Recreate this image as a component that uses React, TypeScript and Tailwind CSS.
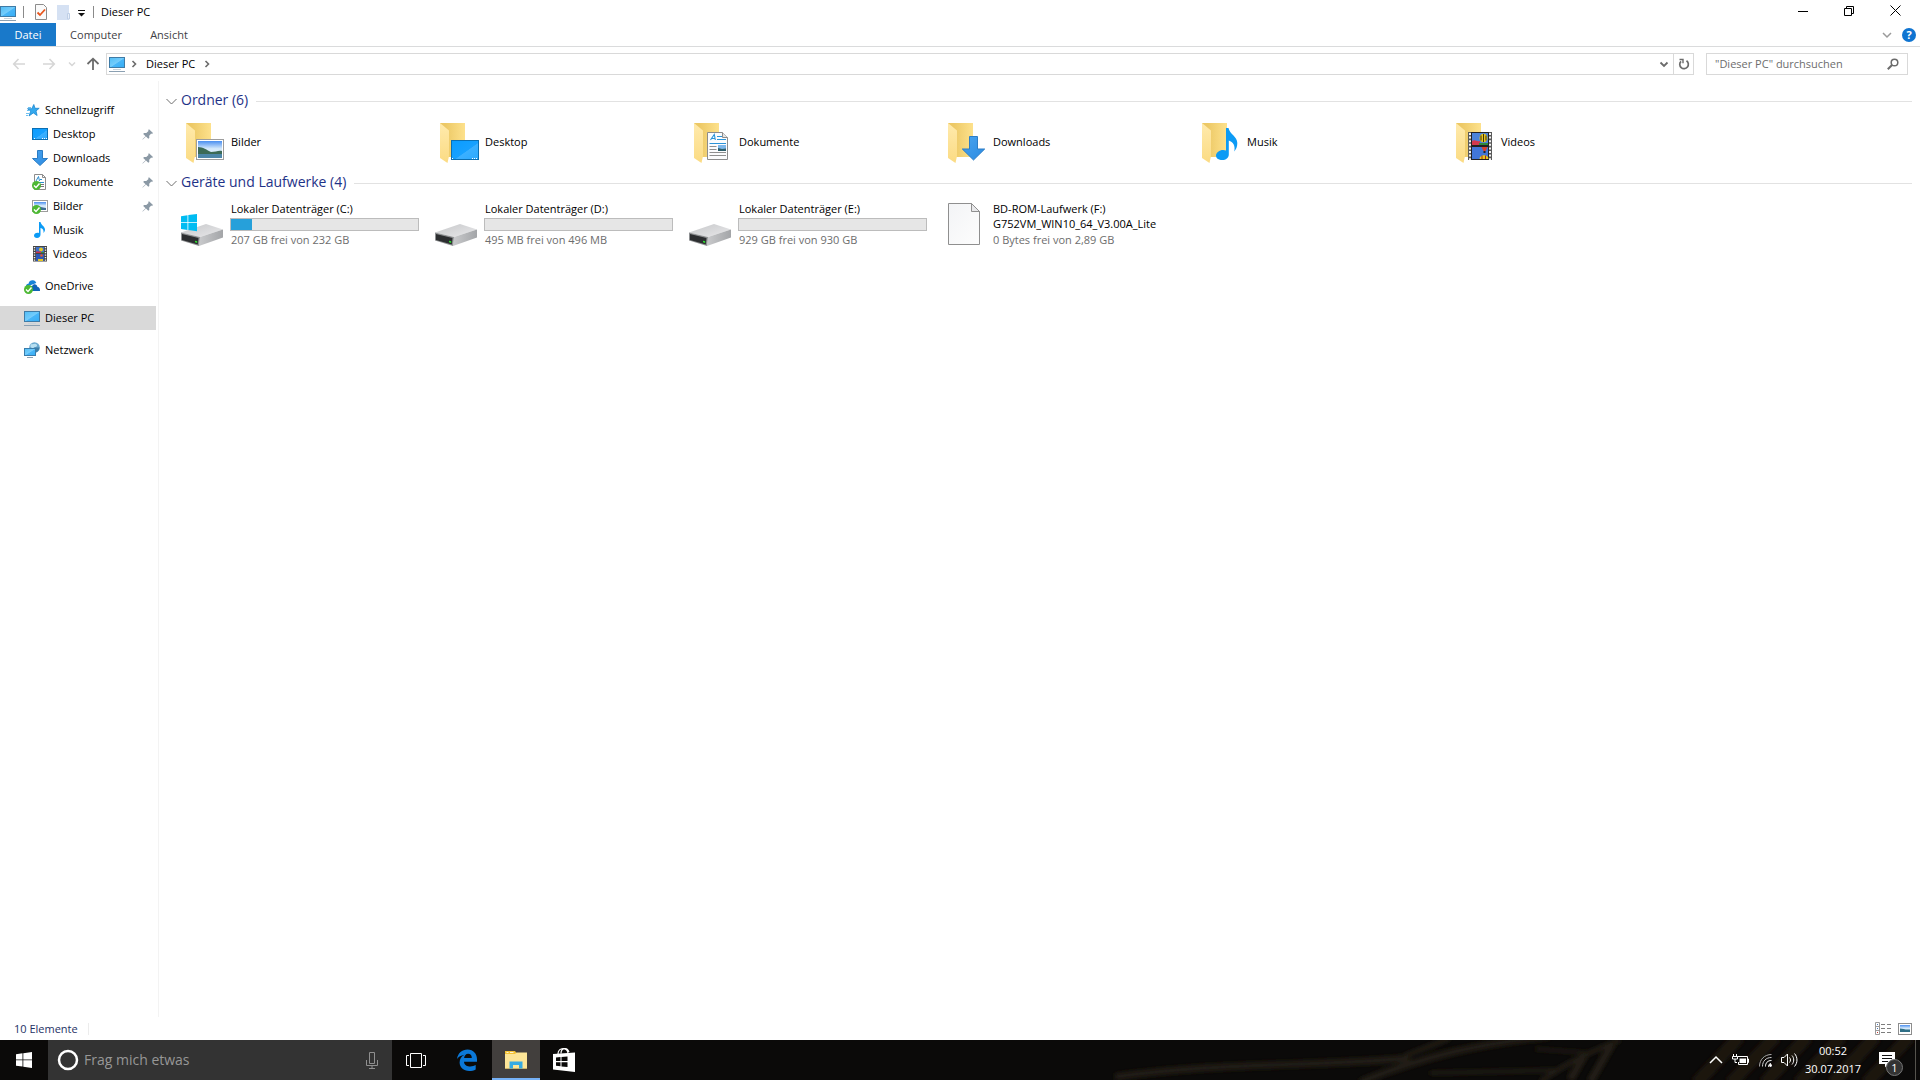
import type { ReactNode } from "react";

const folders = [
  { name: "Bilder", art: "pictures" },
  { name: "Desktop", art: "desktop" },
  { name: "Dokumente", art: "documents" },
  { name: "Downloads", art: "downloads" },
  { name: "Musik", art: "music" },
  { name: "Videos", art: "videos" },
];

const drives = [
  { name: "Lokaler Datenträger (C:)", free: "207 GB frei von 232 GB", used: 11, system: true },
  { name: "Lokaler Datenträger (D:)", free: "495 MB frei von 496 MB", used: 0, system: false },
  { name: "Lokaler Datenträger (E:)", free: "929 GB frei von 930 GB", used: 0, system: false },
];

function Gradients() {
  return (
    <svg className="absolute h-0 w-0" aria-hidden="true">
      <defs>
        <linearGradient id="screen" x1="0" y1="0" x2="1" y2="1">
          <stop offset="0" stopColor="#4fbdf6" />
          <stop offset="0.5" stopColor="#74ccfb" />
          <stop offset="0.55" stopColor="#48b6f8" />
          <stop offset="1" stopColor="#36adf5" />
        </linearGradient>
        <linearGradient id="wall" x1="0" y1="0" x2="1" y2="1">
          <stop offset="0" stopColor="#0a9cff" />
          <stop offset="0.55" stopColor="#17a1ff" />
          <stop offset="0.57" stopColor="#3bb0ff" />
          <stop offset="1" stopColor="#2ba9ff" />
        </linearGradient>
        <linearGradient id="folderBack" x1="0" y1="0" x2="1" y2="0">
          <stop offset="0.2" stopColor="#ecc865" />
          <stop offset="1" stopColor="#fde18c" />
        </linearGradient>
        <linearGradient id="folderFlap" x1="0" y1="0" x2="0" y2="1">
          <stop offset="0" stopColor="#ffeaac" />
          <stop offset="1" stopColor="#fbdb83" />
        </linearGradient>
        <linearGradient id="sky" x1="0" y1="0" x2="0" y2="1">
          <stop offset="0" stopColor="#4a8ff0" />
          <stop offset="0.45" stopColor="#d3e8fb" />
          <stop offset="1" stopColor="#e6f2fb" />
        </linearGradient>
        <linearGradient id="arrow" x1="0" y1="0" x2="1" y2="1">
          <stop offset="0" stopColor="#4aa4ee" />
          <stop offset="1" stopColor="#2a8ae2" />
        </linearGradient>
        <linearGradient id="metal" x1="0" y1="0" x2="1" y2="1">
          <stop offset="0" stopColor="#c6c7c9" />
          <stop offset="1" stopColor="#e9e9eb" />
        </linearGradient>
        <linearGradient id="metalSide" x1="0" y1="0" x2="1" y2="0">
          <stop offset="0" stopColor="#c9cacc" />
          <stop offset="1" stopColor="#a3a5a8" />
        </linearGradient>
        <linearGradient id="paper" x1="0" y1="0" x2="1" y2="1">
          <stop offset="0" stopColor="#f3f4f6" />
          <stop offset="1" stopColor="#fdfdfd" />
        </linearGradient>
      </defs>
    </svg>
  );
}

function Svg({ size = 16, children }: { size?: number; children: ReactNode }) {
  return (
    <svg width={size} height={size} viewBox={`0 0 ${size} ${size}`} className="shrink-0" aria-hidden="true">
      {children}
    </svg>
  );
}

function Monitor() {
  return (
    <Svg>
      <rect x="0.5" y="1.5" width="15" height="10" fill="url(#screen)" stroke="#3f7ba6" />
      <path d="M4 13.5h8" stroke="#c9d3db" />
      <path d="M0 15.5h16" stroke="#8ba0b2" />
    </Svg>
  );
}

function DesktopSmall() {
  return (
    <Svg>
      <rect x="0.5" y="2.5" width="15" height="11" fill="url(#wall)" stroke="#0b6fb3" />
      <path d="M2 12.5h1M10 12.5h1M12 12.5h1M14 12.5h1" stroke="#fff" />
    </Svg>
  );
}

function DownloadSmall() {
  return (
    <Svg>
      <path d="M5.5.5h5v8h5L8 15.5.5 8.5h5z" fill="url(#arrow)" stroke="#2b7cc4" />
    </Svg>
  );
}

function Tick() {
  return (
    <g>
      <circle cx="4.5" cy="11.5" r="4.5" fill="#4cb833" />
      <path d="M2 11.5l2 2 3.5-4" fill="none" stroke="#fff" strokeWidth="1.4" />
    </g>
  );
}

function DocumentSmall() {
  return (
    <Svg>
      <path d="M2.500.5h8l3 3v12h-11z" fill="#fff" stroke="#8c8c8c" />
      <path d="M10.5.5v3h3" fill="none" stroke="#8c8c8c" />
      <path d="M4 7l2.500-4.500 1 4.500M8 5.500h2M5 8.500h7" stroke="#2d8fd0" fill="none" />
      <path d="M8 10.500h4M8 12.500h4" stroke="#777" />
      <Tick />
    </Svg>
  );
}

function PictureSmall() {
  return (
    <Svg>
      <rect x="0.5" y="2.5" width="15" height="11" fill="#fff" stroke="#9c9c9c" />
      <rect x="2" y="4" width="12" height="8" fill="url(#sky)" />
      <path d="M2 9c4-1 6 0 12 1v2H2z" fill="#3f6f93" />
      <Tick />
    </Svg>
  );
}

function MusicSmall() {
  return (
    <Svg>
      <path d="M7 0h1.500c.5 3 4.500 4.500 4.500 7.500 0 1.500-.7 2.500-1.500 3.500.5-3-.8-4.500-3-5v6.500c0 2-1.500 3.500-3.500 3.500S2 15 2 13.500 3.500 10.800 5.500 10.800c.6 0 1.100.1 1.500.3z" fill="#0c9bf5" />
    </Svg>
  );
}

function VideoSmall() {
  return (
    <Svg>
      <rect x="1" y="0" width="14" height="15.5" fill="#444" />
      <path d="M2.500 1v14M13.500 1v14" stroke="#f2f2f2" strokeWidth="1.4" strokeDasharray="1.3 1.2" />
      <rect x="4" y="1" width="8" height="6" fill="#3c6fc8" />
      <rect x="4" y="8" width="8" height="7" fill="#2c58b8" />
      <circle cx="9" cy="3.5" r="2" fill="#e7c81f" />
      <path d="M4 5.500h5V7H4z" fill="#c9304a" />
      <path d="M9 6h3v1H9z" fill="#2d8a3e" />
      <circle cx="9.5" cy="9.5" r="1.300" fill="#e2582b" />
      <path d="M6 13h5v2H6z" fill="#e7c81f" />
    </Svg>
  );
}

function Star() {
  return (
    <Svg>
      <path d="M9.800 2.500l1.200 3.800h4.200L12 8.900l1.100 4.600-3.800-2.600L5 14l1.600-4.600L3.500 6.700h4.300z" fill="#34a9ee" stroke="#1c86d1" strokeWidth="0.8" />
      <path d="M4 5.500h3M3 8.500h3M2 11.500h3M2 13.500h2" stroke="#6cc0f0" />
    </Svg>
  );
}

function OneDrive() {
  return (
    <Svg>
      <path d="M2 9c-.5-2 1-3.500 2.500-3.300C5 3 7 2 9 2.300c1.500.2 2.800 1.200 3.300 2.700L7 7z" fill="#1583d8" />
      <path d="M6 13c-1.500-2.500.2-5.100 2.200-5C9 5.500 13 5.500 13.500 9c2 .2 2.500 1.500 2.500 4z" fill="#0f64b8" />
      <Tick />
    </Svg>
  );
}

function Network() {
  return (
    <Svg>
      <circle cx="10.500" cy="5.500" r="5.300" fill="#6aa9cf" />
      <path d="M7 2c2 1 3-1 5 0s1 3-1 3-1 2-3 1-2-2-1-4zM13 7l2 .5-1.500 2z" fill="#b8dff0" />
      <path d="M10.500 5.500h5a5.300 5.300 0 0 1-4 5z" fill="#3d7fa9" />
      <rect x="0.5" y="6.5" width="11" height="7" fill="url(#screen)" stroke="#3a7cab" />
      <path d="M3 15.500h6" stroke="#8ba0b2" />
    </Svg>
  );
}

function Pin() {
  return (
    <Svg size={12}>
      <path d="M7 1.200L11 5l-1 .9-.8-.3-2 2.200.1 2.200-1 .8-2.300-2.400L.8 11.500l-.4-.3 3.200-3L1.200 5.900l.8-1 2.300.1 2.200-2-.3-.9z" fill="#8b99a5" />
    </Svg>
  );
}

function FolderArt({ art }: { art: string }) {
  return (
    <Svg size={48}>
      <path d="M6 5h25v34H6z" fill="url(#folderBack)" />
      <path d="M6 5l9 7.500v25.500l-1.500 7L6 40z" fill="url(#folderFlap)" />
      {art === "pictures" && (
        <g>
          <rect x="16.5" y="21.5" width="27" height="20" fill="#fff" stroke="#9d9d9d" />
          <rect x="18" y="23" width="24" height="17" fill="url(#sky)" />
          <path d="M18 29c5 0 9 3 13 5 4 0 8-2 11-1v4H18z" fill="#3c6a56" />
          <path d="M18 36h24v4H18z" fill="#4d86a8" />
        </g>
      )}
      {art === "desktop" && (
        <g>
          <rect x="17.5" y="22.5" width="27" height="19" fill="url(#wall)" stroke="#0b6fb3" />
          <path d="M18 40.500h1M38 40.500h1M40 40.500h1M42 40.500h1" stroke="#fff" />
        </g>
      )}
      {art === "documents" && (
        <g>
          <path d="M19.500 14.500h15l5 5v22h-20z" fill="#fbfcfd" stroke="#8c8c8c" />
          <path d="M34.500 14.500v5h5" fill="#e4e4e4" stroke="#8c8c8c" />
          <path d="M22.500 22l3.800-5.500 1 5.500M24 20.500h3M29 18.500h5M29 21.500h9M21.500 25.500H38" stroke="#2b93d8" strokeWidth="1.1" fill="none" />
          <path d="M21.500 28.500h7M21.500 31.500h7M21.500 34.500H38M21.500 37.500H38" stroke="#8f8f8f" />
          <rect x="30" y="27" width="8" height="6" fill="#7db7ea" />
          <path d="M30 30l4 1 4-.5V33h-8z" fill="#2f5f6b" />
        </g>
      )}
      {art === "downloads" && (
        <path d="M27.500 18.500h8v12.500h7.200L31.500 42 20.300 31h7.200z" fill="url(#arrow)" stroke="#2c7dc6" />
      )}
      {art === "music" && (
        <path d="M30 10h2.500c1 6 8.800 8.500 8.800 15 0 3.500-1 6-3 8.500 1.200-6-1.200-9.500-5.500-11v14c0 3.500-3 5.500-6.500 5.500S20 40.500 20 37.500s3.500-5.500 7-5.500c1.200 0 2.200.2 3 .6z" fill="#0c9bf5" />
      )}
      {art === "videos" && (
        <g>
          <rect x="18" y="14" width="24" height="28" fill="#5a5a5a" />
          <path d="M20 15v27M40 15v27" stroke="#f4f4f4" strokeWidth="2" strokeDasharray="2 1.6" />
          <rect x="21.5" y="14.5" width="17" height="13" fill="#4b83d8" stroke="#222" />
          <rect x="21.5" y="28.5" width="17" height="13" fill="#4176d8" stroke="#222" />
          <path d="M22 23c3-2 5 1 8 0v4h-8z" fill="#d23a4e" />
          <path d="M29 25h9v2h-9z" fill="#2d8a3e" />
          <ellipse cx="33.5" cy="20" rx="4" ry="4.300" fill="#e9c81c" />
          <path d="M33.500 16v8M31 17.500v5M36 17.500v5" stroke="#3b2f12" />
          <path d="M31.500 29h6l-2 4h-2z" fill="#d8412c" />
          <path d="M34.500 33v2" stroke="#222" strokeWidth="2" />
          <path d="M29.500 41c0-5 9-5 9 0z" fill="#e9c81c" />
          <path d="M32 37.500V41M35.500 37.500V41" stroke="#a32d20" />
        </g>
      )}
    </Svg>
  );
}

function DriveArt({ system }: { system: boolean }) {
  return (
    <Svg size={48}>
      <path d="M1 32.500L26 24l17 5.500L20 37z" fill="url(#metal)" />
      <path d="M20 37l23-7.500v8L19 46z" fill="url(#metalSide)" />
      <path d="M1 32.500L20 37l-1 9-18-5.500z" fill="#8e9092" />
      <path d="M2 34l16.500 4-.7 6.500L2 40z" fill="#2c2e30" />
      <path d="M15 40.800l2.200.5v1.600l-2.200-.6z" fill="#2fe02f" />
      {system && <path d="M1 16.200l6.500-1v7H1zM8.300 15.100L17 14v8.200H8.300zM1 23h6.500v7L1 29zM8.300 23H17v8.200l-8.700-1.100z" fill="#00bcf2" />}
    </Svg>
  );
}

function FileArt() {
  return (
    <Svg size={48}>
      <path d="M6.500 3.500h23l8 8v33h-31z" fill="url(#paper)" stroke="#8f8f8f" />
      <path d="M29.500 3.500v8h8z" fill="#e8e8ea" stroke="#8f8f8f" />
    </Svg>
  );
}

function Chevron({ className }: { className?: string }) {
  return (
    <svg width="11" height="11" viewBox="0 0 11 11" fill="none" stroke="currentColor" className={className} aria-hidden="true">
      <path d="M.5 3l5 5 5-5" />
    </svg>
  );
}

function NavItem({ icon, label, pinned, child, selected }: { icon: ReactNode; label: string; pinned?: boolean; child?: boolean; selected?: boolean }) {
  return (
    <li className="mr-0.5">
      <a href="#" className={`flex h-6 items-center gap-[5px] pr-[2px] ${child ? "pl-8" : "pl-6"} ${selected ? "bg-[#d9d9d9]" : ""}`}>
        {icon}
        <span className="flex-1 pb-0.5">{label}</span>
        {pinned && <Pin />}
      </a>
    </li>
  );
}

function SectionHeading({ children }: { children: ReactNode }) {
  return (
    <h2 className="flex h-[22px] items-center pr-2 pl-[7px] text-[14px] leading-5 text-[#1e3287]">
      <Chevron className="mr-1 text-[#6e6e6e]" />
      <span className="pb-0.5">{children}</span>
      <span className="ml-2 h-px flex-1 bg-[#e2e2e2]" />
    </h2>
  );
}

function TitleBar() {
  return (
    <header className="flex h-[23px] items-start">
      <div className="flex h-[23px] items-center">
        <span className="mt-0.5"><Monitor /></span>
        <span className="ml-[7px] h-3 w-px bg-[#8a8a8a]" />
        <button aria-label="Eigenschaften" className="ml-[9px]">
          <Svg>
            <path d="M2.500.5h8l3 3v12h-11z" fill="#fafafa" stroke="#8c8c8c" />
            <path d="M4.500 8.500l2.500 2.500L12 5.500" fill="none" stroke="#e8551c" strokeWidth="1.8" />
          </Svg>
        </button>
        <button aria-label="Neuer Ordner" className="ml-[7px]">
          <Svg>
            <path d="M1 1h12v15H1z" fill="#d5e1f3" />
            <path d="M11.500 9.500h2V15h-2z" fill="#e9f0fa" stroke="#bfcfe6" />
          </Svg>
        </button>
        <button aria-label="Symbolleiste anpassen" className="ml-1">
          <Svg size={11}>
            <path d="M2 4.500h7" stroke="#111" />
            <path d="M2 7h7L5.500 10.500z" fill="#111" />
          </Svg>
        </button>
        <span className="ml-1.5 h-3 w-px bg-[#8a8a8a]" />
        <h1 className="ml-[7px] pb-px">Dieser PC</h1>
      </div>
      <div className="mr-0.5 ml-auto flex">
        <button aria-label="Minimieren" className="flex h-5 w-[46px] items-center justify-center">
          <Svg size={11}><path d="M0 6.500h10" stroke="#000" /></Svg>
        </button>
        <button aria-label="Verkleinern" className="flex h-5 w-[46px] items-center justify-center">
          <Svg size={11}><path d="M.5 3.500h7v7h-7zM2.500 3.500v-2h7v7h-2" fill="none" stroke="#000" /></Svg>
        </button>
        <button aria-label="Schließen" className="flex h-5 w-[46px] items-center justify-center">
          <Svg size={11}><path d="M.5.5l10 10M10.500.5l-10 10" stroke="#000" /></Svg>
        </button>
      </div>
    </header>
  );
}

function Ribbon() {
  return (
    <div className="flex h-6 items-stretch border-b border-[#dadbdc] text-[#3f3f46]">
      <button className="w-14 bg-[#1979ca] text-white">Datei</button>
      <button className="ml-[3px] w-[74px]">Computer</button>
      <button className="w-[72px]">Ansicht</button>
      <button aria-label="Menüband erweitern" className="mr-[10px] ml-auto text-[#9a9a9a]">
        <Svg size={10}><path d="M1 3l4 4 4-4" fill="none" stroke="currentColor" strokeWidth="1.5" /></Svg>
      </button>
      <button aria-label="Hilfe" className="mr-1 flex items-center">
        <span className="flex h-[14px] w-[14px] items-center justify-center rounded-full bg-[#0f74d1] font-bold text-white">?</span>
      </button>
    </div>
  );
}

function AddressBar() {
  return (
    <div className="flex h-[34px] items-center pr-3">
      <button aria-label="Zurück" className="ml-3 text-[#d6d6d6]">
        <Svg size={14}><path d="M13 7H2M6.500 2L1.700 7l4.800 5" fill="none" stroke="currentColor" strokeWidth="1.6" /></Svg>
      </button>
      <button aria-label="Vorwärts" className="ml-4 text-[#d6d6d6]">
        <Svg size={14}><path d="M1 7h11M7.500 2l4.800 5-4.800 5" fill="none" stroke="currentColor" strokeWidth="1.6" /></Svg>
      </button>
      <button aria-label="Zuletzt besuchte Orte" className="ml-[11px] text-[#d6d6d6]">
        <Svg size={10}><path d="M2 3.500l3 3 3-3" fill="none" stroke="currentColor" strokeWidth="1.5" /></Svg>
      </button>
      <button aria-label="Nach oben" className="ml-[9px] text-[#6b6b6b]">
        <Svg size={14}><path d="M7 13V2M1.500 7L7 1.700 12.500 7" fill="none" stroke="currentColor" strokeWidth="1.8" /></Svg>
      </button>
      <nav aria-label="Adresse" className="ml-1.5 flex h-[22px] flex-1 items-center border border-[#d9d9d9]">
        <span className="ml-0.5"><Monitor /></span>
        <span className="ml-1 text-[#6b6b6b]"><Svg size={10}><path d="M3.500 2l3 3-3 3" fill="none" stroke="currentColor" strokeWidth="1.6" /></Svg></span>
        <a href="#" className="ml-[7px] pb-0.5">Dieser PC</a>
        <span className="ml-[7px] text-[#6b6b6b]"><Svg size={10}><path d="M3.500 2l3 3-3 3" fill="none" stroke="currentColor" strokeWidth="1.6" /></Svg></span>
        <button aria-label="Verlauf" className="mr-1 ml-auto text-[#6b6b6b]">
          <Svg size={10}><path d="M1.500 3.500L5 7l3.500-3.500" fill="none" stroke="currentColor" strokeWidth="1.8" /></Svg>
        </button>
        <button aria-label="Aktualisieren" className="flex h-full w-5 items-center justify-center border-l border-[#d9d9d9] text-[#6b6b6b]">
          <Svg size={12}>
            <path d="M8.500 2.800A4.300 4.300 0 1 1 3 3.300" fill="none" stroke="currentColor" strokeWidth="1.7" />
            <path d="M1.500 1.500H5v3.800" fill="none" stroke="currentColor" strokeWidth="1.4" />
          </Svg>
        </button>
      </nav>
      <label className="ml-3 flex h-[22px] w-[202px] items-center border border-[#d9d9d9]">
        <input aria-label="Dieser PC durchsuchen" placeholder={'"Dieser PC" durchsuchen'} className="min-w-0 flex-1 pb-0.5 pl-2 outline-none placeholder:text-[#6d6d6d]" />
        <span className="mr-2 text-[#6b6b6b]">
          <Svg size={12}><circle cx="7.5" cy="4.5" r="3.3" fill="none" stroke="currentColor" strokeWidth="1.5" /><path d="M5 7L.8 11.200" stroke="currentColor" strokeWidth="2" /></Svg>
        </span>
      </label>
    </div>
  );
}

function Sidebar() {
  return (
    <nav aria-label="Navigation" className="w-[159px] shrink-0 border-r border-[#f3f3f3] pt-[17px]">
      <ul>
        <NavItem icon={<Star />} label="Schnellzugriff" />
        <NavItem icon={<DesktopSmall />} label="Desktop" child pinned />
        <NavItem icon={<DownloadSmall />} label="Downloads" child pinned />
        <NavItem icon={<DocumentSmall />} label="Dokumente" child pinned />
        <NavItem icon={<PictureSmall />} label="Bilder" child pinned />
        <NavItem icon={<MusicSmall />} label="Musik" child />
        <NavItem icon={<VideoSmall />} label="Videos" child />
      </ul>
      <ul className="mt-2 space-y-2">
        <NavItem icon={<OneDrive />} label="OneDrive" />
        <NavItem icon={<Monitor />} label="Dieser PC" selected />
        <NavItem icon={<Network />} label="Netzwerk" />
      </ul>
    </nav>
  );
}

function Content() {
  return (
    <main className="min-w-0 flex-1 pt-[9px]">
      <section>
        <SectionHeading>Ordner (6)</SectionHeading>
        <ul className="mt-1.5 grid grid-cols-[repeat(auto-fill,254px)] pl-[21px]">
          {folders.map((f) => (
            <li key={f.name}>
              <a href="#" className="flex h-12 items-center gap-[3px]">
                <FolderArt art={f.art} />
                <span className="pb-0.5">{f.name}</span>
              </a>
            </li>
          ))}
        </ul>
      </section>
      <section className="mt-1.5">
        <SectionHeading>Geräte und Laufwerke (4)</SectionHeading>
        <ul className="mt-1.5 grid grid-cols-[repeat(auto-fill,254px)] pl-[21px]">
          {drives.map((d) => (
            <li key={d.name}>
              <a href="#" className="flex items-center gap-0.5">
                <DriveArt system={d.system} />
                <span className="block w-[189px]">
                  <span className="block pl-px">{d.name}</span>
                  <span role="meter" aria-label={d.name} aria-valuemin={0} aria-valuemax={100} aria-valuenow={d.used} className="mt-0.5 mb-px block h-[13px] border border-[#bcbcbc] bg-[#e6e6e6]">
                    <span className="block h-full bg-[#26a0da]" style={{ width: `${d.used}%` }} />
                  </span>
                  <span className="block pl-px text-[#6d6d6d]">{d.free}</span>
                </span>
              </a>
            </li>
          ))}
          <li>
            <a href="#" className="flex items-center gap-[3px]">
              <FileArt />
              <span className="block pb-px">
                <span className="block">BD-ROM-Laufwerk (F:)</span>
                <span className="block">G752VM_WIN10_64_V3.00A_Lite</span>
                <span className="block pt-px text-[#6d6d6d]">0 Bytes frei von 2,89 GB</span>
              </span>
            </a>
          </li>
        </ul>
      </section>
    </main>
  );
}

function StatusBar() {
  return (
    <footer className="flex h-[23px] items-center pr-2 pl-[14px] text-[#1e3264]">
      <span>10 Elemente</span>
      <span className="ml-[10px] h-3 w-px bg-[#ececec]" />
      <button aria-label="Details" className="ml-auto">
        <svg width="17" height="14" viewBox="0 0 17 14" aria-hidden="true">
          <path d="M.5.5h4v12h-4zM.5 4.500h4M.5 8.500h4" fill="none" stroke="#9a9a9a" />
          <path d="M6 2.500h4M12 2.500h4M6 6.500h4M12 6.500h4M6 10.500h4M12 10.500h4" stroke="#7d7d7d" />
          <path d="M2 2.500h1M2 6.500h1" stroke="#4a78b8" />
          <path d="M2 10.500h1" stroke="#c8372d" />
        </svg>
      </button>
      <button aria-label="Große Symbole" className="ml-1.5">
        <svg width="14" height="12" viewBox="0 0 14 12" aria-hidden="true">
          <rect x="0.5" y="0.5" width="13" height="11" fill="#fff" stroke="#8d8d8d" />
          <rect x="2" y="2" width="10" height="7" fill="url(#sky)" />
          <path d="M2 5.500c3 0 5 1.500 10 1V9H2z" fill="#2f6f86" />
        </svg>
      </button>
    </footer>
  );
}

function Foliage() {
  return (
    <svg className="absolute top-0 right-0 h-10 w-[820px]" viewBox="0 0 820 40" aria-hidden="true">
      <defs>
        <filter id="soft" x="-10%" y="-50%" width="120%" height="200%"><feGaussianBlur stdDeviation="2" /></filter>
      </defs>
      <g filter="url(#soft)" fill="none" stroke="#201d12">
        <path d="M15 37C120 22 210 27 310 18" strokeWidth="7" />
        <path d="M260 42C330 14 380 4 450-4" strokeWidth="7" />
        <path d="M305 16L350-2" strokeWidth="5" />
        <path d="M330 33L460 30" strokeWidth="4" />
        <path d="M435 9L490 13" strokeWidth="3" />
        <path d="M440 42C470 20 500 8 520 0" strokeWidth="5" />
        <path d="M470 40L484 16M490 42L512 4" strokeWidth="8" />
        <g stroke="#1b1911" strokeWidth="13">
          <path d="M596 44L640-4M630 44L676-4M664 44L708-4M698 44L742-4M732 44L776-4M766 44L810-4" />
        </g>
      </g>
    </svg>
  );
}

function Taskbar() {
  return (
    <footer className="relative h-10 bg-[#0b0a09] text-white">
      <Foliage />
      <div className="relative flex h-full items-stretch">
        <button aria-label="Start" className="flex w-12 items-center justify-center">
          <Svg><path d="M0 2.200l6.500-.9v6.200H0zM7.300 1.200L16 0v7.500H7.300zM0 8.300h6.500v6.300L0 13.700zM7.300 8.300H16V16l-8.700-1.300z" fill="#fff" /></Svg>
        </button>
        <label className="flex w-[344px] items-center bg-[#333] pr-[14px] pl-2">
          <Svg size={24}><circle cx="12" cy="12" r="9" fill="none" stroke="#fff" strokeWidth="2.5" /></Svg>
          <input aria-label="Frag mich etwas" placeholder="Frag mich etwas" className="ml-1 min-w-0 flex-1 text-[14px] leading-5 outline-none placeholder:text-[#979797]" />
          <svg width="12" height="17" viewBox="0 0 12 17" fill="none" stroke="#8f8f8f" aria-hidden="true">
            <path d="M3.500.5h5v11h-5zM.5 8v5.500h11V8M6 13.500v3M3 16.500h6" />
          </svg>
        </label>
        <button aria-label="Taskansicht" className="flex w-12 items-center justify-center">
          <svg width="20" height="15" viewBox="0 0 20 15" fill="none" stroke="#fff" aria-hidden="true">
            <path d="M4.500.5h11v14h-11zM3 2.500H.5v10H3M17 2.500h2.500v10H17" />
          </svg>
        </button>
        <button aria-label="Microsoft Edge" className="flex w-[52px] items-center justify-center pl-0.5">
          <Svg size={22}>
            <path d="M1 10C2 4 6 .5 11.500.5c6 0 9.500 4.500 9.500 9.800v2.400H8c.2 3.500 3.300 4.800 6.300 4.800 2.200 0 4-.6 5.400-1.400v4.300c-1.800 1-4 1.500-6.500 1.500C7.500 21.900 3.600 18.500 3.600 13.600c0-3.600 2-6.300 4.900-7.800C4.800 6.500 2.500 8 1 10zM8.100 9h7.700c0-2.800-1.500-4.200-3.700-4.200C9.900 4.800 8.500 6.600 8.100 9z" fill="#0b78d8" />
          </Svg>
        </button>
        <button aria-label="Datei-Explorer" className="flex w-12 items-center justify-center border-b-2 border-[#76b1f5] bg-[#423f3d] pt-0.5">
          <svg width="22" height="18" viewBox="0 0 22 18" aria-hidden="true">
            <path d="M0 0h10l1.500 2H22v15.500H0z" fill="#f3c235" />
            <path d="M0 3h10l1.500-1.500H22V17.500H0z" fill="#fce597" />
            <path d="M4.500 17.500V10.500h13v7H14v-3.500H8v3.500z" fill="#36abe2" />
            <path d="M1.500 1.500h2M5 1.500h3.500" stroke="#fff3cf" />
          </svg>
        </button>
        <button aria-label="Store" className="flex w-12 items-center justify-center">
          <svg width="22" height="24" viewBox="0 0 22 24" aria-hidden="true">
            <path d="M0 6l22-1.500V24L0 21.500z" fill="#fff" />
            <path d="M5 6c0-7 10-7 10-.5M8 5.500c0-6 6-6.500 8-1.500" fill="none" stroke="#fff" strokeWidth="1.2" />
            <path d="M3 9.500l4.500-.4v4H3zM8.500 9l6-.5v4.600h-6zM3 14.200h4.500v4L3 17.700zM8.500 14.200h6v4.900l-6-.7z" fill="#0a0908" />
          </svg>
        </button>
        <div className="ml-auto flex items-center">
          <button aria-label="Ausgeblendete Symbole" className="mr-[9px]">
            <svg width="14" height="12" viewBox="0 0 14 12" fill="none" stroke="#fff" strokeWidth="1.5" aria-hidden="true"><path d="M1 9l6-6 6 6" /></svg>
          </button>
          <button aria-label="Akku" className="mr-[10px]">
            <svg width="17" height="13" viewBox="0 0 17 13" aria-hidden="true">
              <path d="M5.500 2.500h10v8h-9V8M15.500 5h1v3.500h-1" fill="none" stroke="#fff" />
              <path d="M7.500 4.500H14V9H7.500z" fill="#fff" />
              <path d="M1.500 0v2M4.500 0v2M.5 2.500h5v2.500h-5zM3 5v3.500h2" fill="none" stroke="#fff" />
            </svg>
          </button>
          <button aria-label="Netzwerk" className="mr-2">
            <Svg size={14}>
              <g fill="none" stroke="#fff">
                <path d="M10 13.500H9.500c0-1.800.8-2.600 2.500-3" />
                <path d="M6.500 13.500c0-3.500 2-6 6-6" />
                <path d="M3.500 13.500c0-5.500 3.500-9 9-9" stroke="#d0d0d0" />
                <path d="M.5 13.500c0-7 5-12 12-12" stroke="#aaa" />
              </g>
              <circle cx="11.5" cy="12.5" r="1.4" fill="#fff" />
            </Svg>
          </button>
          <button aria-label="Lautstärke" className="mr-[7px]">
            <svg width="17" height="14" viewBox="0 0 17 14" fill="none" stroke="#fff" aria-hidden="true">
              <path d="M.5 4.500h2.500L6.500 1v12L3 9.500H.5zM8.500 4.500c1.300 1.500 1.300 3.500 0 5M11 2.500c2.300 2.600 2.300 6.400 0 9M13.500.5c3.300 3.700 3.300 9.300 0 13" />
            </svg>
          </button>
          <div className="w-14 text-center leading-[18px] whitespace-nowrap">
            <div>00:52</div>
            <div>30.07.2017</div>
          </div>
          <button aria-label="Benachrichtigungen" className="relative mr-5 ml-[18px]">
            <Svg><path d="M0 0h16v12H9l-3 3.500V12H0z" fill="#fff" /><path d="M3 3.500h10M3 6.500h10M3 9.500h6" stroke="#111" /></Svg>
            <span className="absolute top-[7px] left-[7px] flex h-[17px] w-[17px] items-center justify-center rounded-full border border-[#777] bg-[#333] text-[11px]">1</span>
          </button>
          <span className="mr-1 h-10 w-px bg-[#55534d]" />
        </div>
      </div>
    </footer>
  );
}

export default function App() {
  return (
    <div className="flex min-h-screen flex-col bg-white font-['Open_Sans','Noto_Sans',sans-serif] text-[11px] leading-[15px] text-black">
      <Gradients />
      <TitleBar />
      <Ribbon />
      <AddressBar />
      <div className="flex flex-1">
        <Sidebar />
        <Content />
      </div>
      <StatusBar />
      <Taskbar />
    </div>
  );
}
